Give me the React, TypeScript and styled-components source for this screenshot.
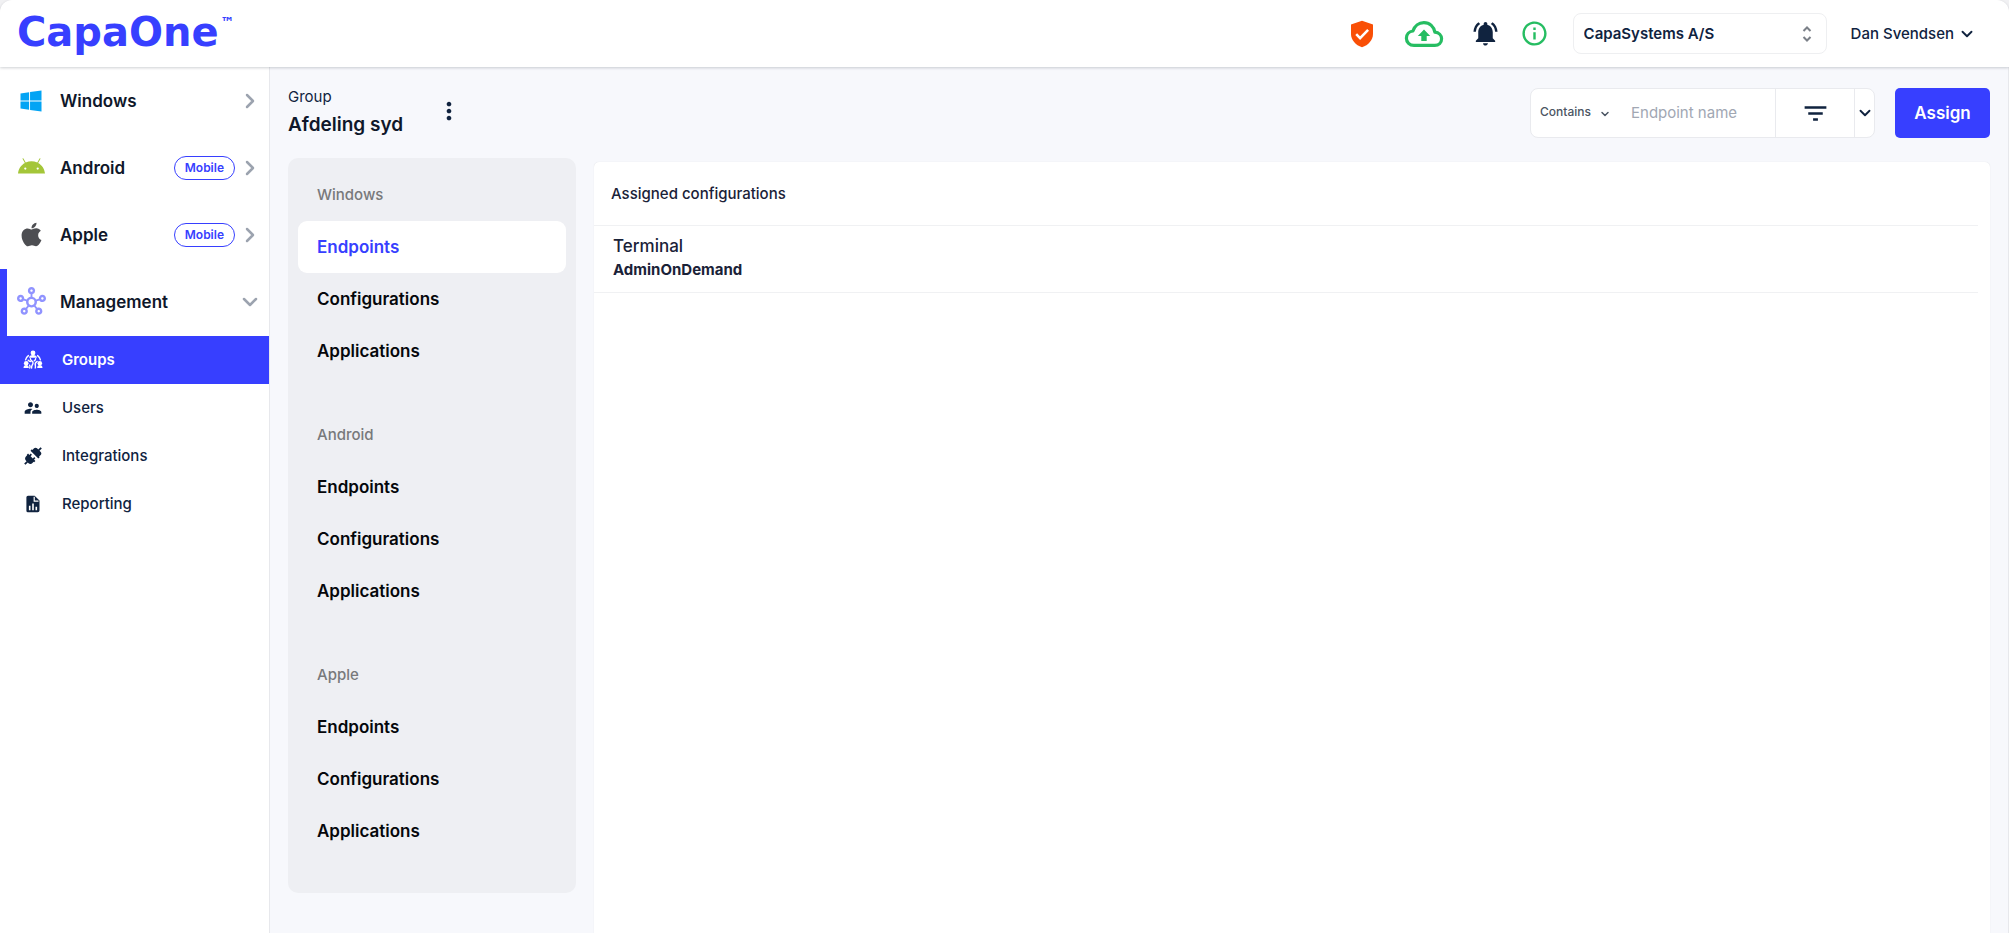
import React from "react";
import styled, { createGlobalStyle, css } from "styled-components";
import {
  MdFilterList,
  MdInfoOutline,
  MdMoreVert,
  MdNotificationsActive,
  MdOutlineHub,
  MdSupervisorAccount,
} from "react-icons/md";
import { FaAndroid, FaApple, FaWindows } from "react-icons/fa";
import { FiChevronDown, FiChevronRight } from "react-icons/fi";

const color = {
  primary: "#373fff",
  navy: "#10233f",
  ink: "#111827",
  muted: "#9ca3af",
  line: "#eeeff1",
  page: "#f7f8fc",
  panel: "#eeeff3",
  green: "#26bd62",
  orange: "#f94f06",
};

const GlobalStyle = createGlobalStyle`
  *, *::before, *::after { box-sizing: border-box; }
  body {
    margin: 0;
    background: #f1f1f3;
    color: ${color.ink};
    font-family: Inter, "Liberation Sans", sans-serif;
    font-size: 15px;
  }
  button, input, select { font: inherit; color: inherit; }
  button { background: none; border: 0; padding: 0; cursor: pointer; }
  h1, h2, p, ul { margin: 0; padding: 0; }
  ul { list-style: none; }
  a { color: inherit; text-decoration: none; }
  svg { display: block; flex: none; }
`;

const Page = styled.div`
  display: flex;
  flex-direction: column;
  min-height: 100vh;
`;

/* ---------- top bar ---------- */

const TopBar = styled.header`
  position: relative;
  display: flex;
  align-items: center;
  justify-content: space-between;
  height: 67px;
  padding: 0 33px 0 17px;
  background: #fff;
  border-radius: 12px 12px 0 0;
  box-shadow: 0 1px 3px rgba(17, 24, 39, 0.2);
`;

const Logo = styled.a`
  display: flex;
  align-items: flex-start;
  gap: 2px;
  padding-bottom: 4px;
  color: ${color.primary};
  font-family: "DejaVu Sans", sans-serif;
  font-size: 40px;
  font-weight: 700;
  line-height: 44px;
`;

const TradeMark = styled.span`
  font-size: 14px;
  line-height: 24px;
`;

const TopActions = styled.div`
  display: flex;
  align-items: center;
`;

const IconButton = styled.button<{ $tone: string; $narrow?: boolean }>`
  display: flex;
  align-items: center;
  justify-content: center;
  width: ${(p) => (p.$narrow ? 36 : 62)}px;
  height: 40px;
  color: ${(p) => p.$tone};
`;

const SelectWrap = styled.div`
  position: relative;
  display: flex;
  align-items: center;

  svg {
    position: absolute;
    pointer-events: none;
  }
`;

const CompanyWrap = styled(SelectWrap)`
  width: 254px;
  margin: 0 24px 0 20px;

  svg { right: 13px; }
`;

const CompanySelect = styled.select`
  appearance: none;
  width: 100%;
  height: 41px;
  padding: 0 32px 0 10px;
  border: 1px solid ${color.line};
  border-radius: 8px;
  background: #fff;
  color: ${color.navy};
  font-weight: 600;
`;

const UserButton = styled.button`
  display: flex;
  align-items: center;
  gap: 4px;
  color: ${color.navy};
  font-weight: 500;
`;

/* ---------- side navigation ---------- */

const Body = styled.div`
  display: flex;
  flex: 1;
`;

const Sidebar = styled.nav`
  flex: none;
  width: 270px;
  padding-top: 1px;
  background: #fff;
  border-right: 1px solid #e7e8ec;
`;

const NavButton = styled.button<{ $open?: boolean }>`
  display: grid;
  grid-template-columns: 28px 1fr auto 26px;
  align-items: center;
  width: 100%;
  height: 67px;
  padding: 0 6px 2px 17px;
  text-align: left;
  font-size: 17px;
  font-weight: 600;
  color: #0f172a;
  ${(p) =>
    p.$open &&
    css`
      border-left: 7px solid ${color.primary};
      padding-left: 10px;
    `}
`;

const NavIcon = styled.span<{ $tone: string }>`
  display: flex;
  justify-content: center;
  color: ${(p) => p.$tone};
`;

const NavLabel = styled.span`
  padding-left: 15px;
`;

const Pill = styled.span`
  display: block;
  padding: 0 10px;
  margin-right: 2px;
  border: 1px solid ${color.primary};
  border-radius: 12px;
  color: ${color.primary};
  font-size: 12px;
  font-weight: 600;
  line-height: 22px;
`;

const Arrow = styled.span`
  display: flex;
  justify-content: center;
  color: ${color.muted};
`;

const SubLink = styled.a<{ $active?: boolean }>`
  display: grid;
  grid-template-columns: 20px 1fr;
  gap: 19px;
  align-items: center;
  justify-items: start;
  height: 48px;
  padding: 0 0 1px 23px;
  background: ${(p) => (p.$active ? color.primary : "transparent")};
  color: ${(p) => (p.$active ? "#fff" : color.navy)};
  font-weight: ${(p) => (p.$active ? 600 : 500)};

  svg { justify-self: center; }
`;

/* ---------- content ---------- */

const Main = styled.main`
  display: flex;
  flex: 1;
  flex-direction: column;
  min-width: 0;
  padding: 16px 18px 0;
  background: ${color.page};
  border-right: 1px solid #e7e8ec;
`;

const PageHead = styled.div`
  display: flex;
  align-items: flex-start;
  justify-content: space-between;
  margin-bottom: 19px;
`;

const TitleRow = styled.div`
  display: flex;
  align-items: center;
  gap: 32px;
`;

const Kicker = styled.p`
  color: ${color.navy};
  line-height: 28px;
`;

const Title = styled.h1`
  color: #0f172a;
  font-size: 19px;
  font-weight: 600;
  line-height: 28px;
`;

const KebabButton = styled.button`
  color: ${color.navy};
`;

const Tools = styled.div`
  display: flex;
  gap: 20px;
  height: 50px;
  margin-top: 5px;
`;

const FilterGroup = styled.form`
  display: flex;
  width: 345px;
  overflow: hidden;
  background: #fff;
  border: 1px solid #e9eaee;
  border-radius: 8px;
`;

const MatchWrap = styled(SelectWrap)`
  width: 88px;

  svg { right: 8px; top: 19px; color: #4b5563; }
`;

const MatchSelect = styled.select`
  appearance: none;
  width: 100%;
  height: 100%;
  padding: 0 24px 4px 9px;
  border: 0;
  background: transparent;
  color: #4b5563;
  font-size: 12px;
  font-weight: 500;
`;

const NameInput = styled.input`
  flex: 1;
  min-width: 0;
  padding: 0 0 2px 12px;
  border: 0;
  background: transparent;
  outline: none;

  &::placeholder { color: #a1a7b3; opacity: 1; }
`;

const FilterButton = styled.button<{ $width: number }>`
  display: flex;
  flex: none;
  align-items: center;
  justify-content: center;
  width: ${(p) => p.$width}px;
  border-left: 1px solid #e9eaee;
  color: ${color.navy};
`;

const AssignButton = styled.button`
  width: 95px;
  border-radius: 5px;
  background: ${color.primary};
  color: #fff;
  font-size: 17px;
  font-weight: 600;
`;

const Columns = styled.div`
  display: flex;
  flex: 1;
  align-items: flex-start;
  gap: 18px;
`;

const GroupNav = styled.nav`
  display: flex;
  flex: none;
  flex-direction: column;
  gap: 32px;
  width: 288px;
  padding: 11px 10px 36px;
  background: ${color.panel};
  border-radius: 10px;
`;

const SectionLabel = styled.h2`
  padding-left: 19px;
  color: #78797b;
  font-size: 15px;
  font-weight: 500;
  line-height: 52px;
`;

const SectionLink = styled.a<{ $active?: boolean }>`
  display: block;
  padding-left: 19px;
  border-radius: 9px;
  background: ${(p) => (p.$active ? "#fff" : "transparent")};
  color: ${(p) => (p.$active ? color.primary : "#05070b")};
  font-size: 17px;
  font-weight: 600;
  line-height: 52px;
`;

const Card = styled.section`
  flex: 1;
  align-self: stretch;
  min-width: 0;
  margin-top: 4px;
  padding-right: 12px;
  background: #fff;
  border-radius: 5px 5px 0 0;
  box-shadow: 0 0 1px rgba(17, 24, 39, 0.15);
`;

const ConfigTable = styled.table`
  width: 100%;
  border-collapse: collapse;
  text-align: left;

  th, td { border-bottom: 1px solid #f0f1f3; }

  th {
    height: 63px;
    padding: 0 17px;
    font-weight: 500;
    color: #1a2238;
  }

  td {
    padding: 8px 19px 10px;
    color: #1a2238;
    line-height: 24px;
  }
`;

const ConfigType = styled.div`
  font-size: 17px;
  font-weight: 500;
`;

const ConfigName = styled.div`
  font-weight: 700;
`;

/* ---------- drawings ---------- */

const ShieldIcon = () => (
  <svg width="24" height="28" viewBox="0 0 24 28" aria-hidden="true">
    <path d="M12 .7 23 4.600V14c0 6-4.600 11.200-11 13.300C5.600 25.200 1 20 1 14V4.600Z" fill="currentColor" />
    <path d="m6.200 14.200 3.900 4 8-8.400" fill="none" stroke="#fff" strokeWidth="2.500" />
  </svg>
);

const CloudIcon = () => (
  <svg width="40" height="28" viewBox="0 0 40 28" aria-hidden="true">
    <path
      d="M10 25.400C5.600 25.400 2.400 22.300 2.400 18.200c0-3.800 2.700-6.700 6.500-7.200C10.500 6 14.700 2.600 19.900 2.600c5.900 0 10.100 4.100 11 9.600 4 .3 6.700 3 6.700 6.600 0 3.800-2.900 6.600-6.800 6.600Z"
      fill="none"
      stroke="currentColor"
      strokeWidth="3.200"
      strokeLinejoin="round"
    />
    <path d="m20 9.600 6.200 6.400h-3.500v5h-5.400v-5h-3.500Z" fill="currentColor" />
  </svg>
);

const UpDownIcon = () => (
  <svg width="14" height="18" viewBox="0 0 14 18" fill="none" stroke="#7b8088" strokeWidth="2" aria-hidden="true">
    <path d="m3.500 6 3.500-3.500L10.500 6M3.500 12 7 15.500l3.500-3.500" />
  </svg>
);

const GroupsIcon = () => (
  <svg width="20" height="20" viewBox="0 0 20 20" aria-hidden="true">
    <g fill="currentColor">
      <circle cx="10" cy="3" r="2.400" />
      <path d="M6 7.800C6 5.900 7.600 4.900 10 4.900s4 1 4 2.900Z" />
      <circle cx="3.200" cy="13.200" r="2.300" />
      <circle cx="16.800" cy="13.200" r="2.300" />
      <path d="M.5 18c0-2 1-3 2.700-3s2.600 1 2.600 3ZM14.200 18c0-2 .9-3 2.600-3s2.700 1 2.700 3Z" />
    </g>
    <g fill="none" stroke="currentColor" strokeWidth="1.400" strokeLinecap="round">
      <path d="M5.400 5.600C3.800 6.800 2.900 8.200 2.600 9.800M14.600 5.600c1.600 1.200 2.500 2.600 2.800 4.200" />
      <path d="M7.400 8.600c-.4 2.600 3.400 2 2.600 4.800-.4 1.400-1.700 2.200-1.400 4.600" />
      <path d="M5.200 10.200c.6.9 1.600 1.300 2.600 1.400M12.600 8.800c-.2.900-.7 1.600-1.400 2" />
      <path d="M14.200 11.400c-1.700.8-2.300 2.600-1.800 4.400.2.900.2 1.500-.2 2.200M6.600 15.200c.6.900.6 1.800.2 2.800" />
    </g>
  </svg>
);

const PlugIcon = () => (
  <svg width="18" height="18" viewBox="0 0 18 18" aria-hidden="true">
    <g transform="rotate(45 9 9)">
      <path
        d="M8.100-2.600h1.800V.7h1.700c1.200 0 2.100.9 2.100 2.100v2.300h.8v1.900H3.500V5.100h.8V2.800C4.300 1.600 5.200.7 6.400.7h1.700Z"
        fill="currentColor"
      />
      <path
        d="M5.700 8.900h1.700v1.900h3.200V8.900h1.700v1.900h1.900v1.900h-.6v1.700c0 1.600-1.200 2.800-2.700 2.800h-1v3.400H8.100v-3.400h-1c-1.500 0-2.700-1.200-2.700-2.800v-1.700h-.6v-1.900h1.900Z"
        fill="currentColor"
      />
    </g>
  </svg>
);

const ReportIcon = () => (
  <svg width="14" height="18" viewBox="0 0 14 18" aria-hidden="true">
    <path
      d="M2 .7h6.600l4.900 4.900v9.900a1.800 1.800 0 0 1-1.800 1.800H2A1.600 1.600 0 0 1 .4 15.700V2.300A1.600 1.600 0 0 1 2 .7Z"
      fill="currentColor"
    />
    <path d="M8.200 1.800v4.300h4.300" fill="none" stroke="#fff" strokeWidth="1.200" />
    <path d="M3.700 15.300v-4.500M7 15.300V8.600M10.300 15.300v-3.500" stroke="#fff" strokeWidth="1.600" />
  </svg>
);

/* ---------- data ---------- */

const platforms = [
  { name: "Windows", icon: <FaWindows size={24} />, tone: "#03a4f4", mobile: false },
  { name: "Android", icon: <FaAndroid size={27} />, tone: "#a4c639", mobile: true },
  { name: "Apple", icon: <FaApple size={27} />, tone: "#4d4e52", mobile: true },
];

const managementLinks = [
  { name: "Groups", icon: <GroupsIcon />, active: true },
  { name: "Users", icon: <MdSupervisorAccount size={20} /> },
  { name: "Integrations", icon: <PlugIcon /> },
  { name: "Reporting", icon: <ReportIcon /> },
];

const sections = ["Windows", "Android", "Apple"];
const sectionLinks = ["Endpoints", "Configurations", "Applications"];

const configurations = [{ type: "Terminal", name: "AdminOnDemand" }];

export default function App() {
  return (
    <Page>
      <GlobalStyle />
      <TopBar>
        <Logo href="#">
          CapaOne<TradeMark>™</TradeMark>
        </Logo>
        <TopActions>
          <IconButton $tone={color.orange} aria-label="Security status">
            <ShieldIcon />
          </IconButton>
          <IconButton $tone={color.green} aria-label="Upload status">
            <CloudIcon />
          </IconButton>
          <IconButton $tone={color.navy} aria-label="Notifications">
            <MdNotificationsActive size={29} />
          </IconButton>
          <IconButton $tone={color.green} $narrow aria-label="Information">
            <MdInfoOutline size={29} />
          </IconButton>
          <CompanyWrap>
            <CompanySelect aria-label="Company">
              <option>CapaSystems A/S</option>
            </CompanySelect>
            <UpDownIcon />
          </CompanyWrap>
          <UserButton>
            Dan Svendsen
            <FiChevronDown size={18} strokeWidth={2.5} />
          </UserButton>
        </TopActions>
      </TopBar>

      <Body>
        <Sidebar aria-label="Main">
          {platforms.map((p) => (
            <NavButton key={p.name}>
              <NavIcon $tone={p.tone}>{p.icon}</NavIcon>
              <NavLabel>{p.name}</NavLabel>
              <span>{p.mobile && <Pill>Mobile</Pill>}</span>
              <Arrow>
                <FiChevronRight size={24} strokeWidth={2.5} />
              </Arrow>
            </NavButton>
          ))}
          <NavButton $open aria-expanded="true">
            <NavIcon $tone="#9093ff">
              <MdOutlineHub size={29} />
            </NavIcon>
            <NavLabel>Management</NavLabel>
            <span />
            <Arrow>
              <FiChevronDown size={24} strokeWidth={2.5} />
            </Arrow>
          </NavButton>
          {managementLinks.map((l) => (
            <SubLink key={l.name} href="#" $active={l.active}>
              {l.icon}
              {l.name}
            </SubLink>
          ))}
        </Sidebar>

        <Main>
          <PageHead>
            <TitleRow>
              <div>
                <Kicker>Group</Kicker>
                <Title>Afdeling syd</Title>
              </div>
              <KebabButton aria-label="More actions">
                <MdMoreVert size={28} />
              </KebabButton>
            </TitleRow>
            <Tools>
              <FilterGroup>
                <MatchWrap>
                  <MatchSelect aria-label="Match type">
                    <option>Contains</option>
                  </MatchSelect>
                  <FiChevronDown size={12} strokeWidth={3} />
                </MatchWrap>
                <NameInput aria-label="Endpoint name" placeholder="Endpoint name" />
                <FilterButton type="button" $width={79} aria-label="Filter">
                  <MdFilterList size={29} />
                </FilterButton>
                <FilterButton type="button" $width={20} aria-label="Filter options">
                  <FiChevronDown size={18} strokeWidth={2.5} />
                </FilterButton>
              </FilterGroup>
              <AssignButton>Assign</AssignButton>
            </Tools>
          </PageHead>

          <Columns>
            <GroupNav aria-label="Group">
              {sections.map((s, i) => (
                <div key={s}>
                  <SectionLabel>{s}</SectionLabel>
                  <ul>
                    {sectionLinks.map((l, j) => (
                      <li key={l}>
                        <SectionLink href="#" $active={i === 0 && j === 0}>
                          {l}
                        </SectionLink>
                      </li>
                    ))}
                  </ul>
                </div>
              ))}
            </GroupNav>
            <Card>
              <ConfigTable>
                <thead>
                  <tr>
                    <th scope="col">Assigned configurations</th>
                  </tr>
                </thead>
                <tbody>
                  {configurations.map((c) => (
                    <tr key={c.name}>
                      <td>
                        <ConfigType>{c.type}</ConfigType>
                        <ConfigName>{c.name}</ConfigName>
                      </td>
                    </tr>
                  ))}
                </tbody>
              </ConfigTable>
            </Card>
          </Columns>
        </Main>
      </Body>
    </Page>
  );
}
